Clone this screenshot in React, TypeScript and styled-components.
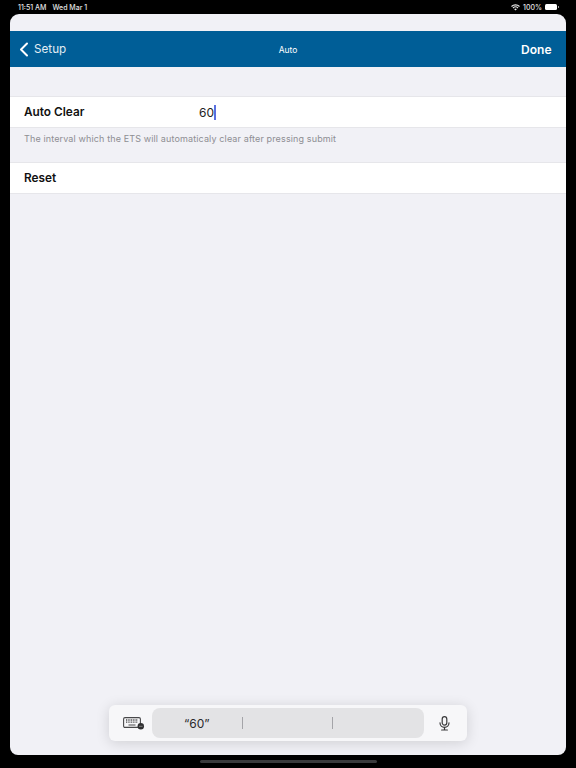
import React from "react";
import styled, { createGlobalStyle } from "styled-components";

const GlobalStyle = createGlobalStyle`
  html, body {
    margin: 0;
    padding: 0;
    background: #000;
    font-family: Inter, "Liberation Sans", sans-serif;
  }
`;

const Screen = styled.div`
  width: 576px;
  height: 768px;
  background: #000;
  display: flex;
  flex-direction: column;
  overflow: hidden;
`;

const StatusBar = styled.div`
  height: 14px;
  padding: 0 19px 0 18px;
  box-sizing: border-box;
  display: flex;
  align-items: center;
  justify-content: space-between;
  color: #e4e4e4;
  font-size: 7px;
  font-weight: 500;
`;

const StatusGroup = styled.div<{ $gap: number }>`
  display: flex;
  align-items: center;
  gap: ${(props) => props.$gap}px;
`;

const Battery = styled.div`
  width: 12px;
  height: 6px;
  border-radius: 1.5px;
  background: #fff;
  position: relative;

  &::after {
    content: "";
    position: absolute;
    right: -2px;
    top: 2px;
    width: 1px;
    height: 2px;
    background: #999;
  }
`;

const Sheet = styled.div`
  position: relative;
  width: 556px;
  height: 741px;
  margin-left: 10px;
  background: #f1f1f6;
  border-radius: 9px 9px 8px 8px;
  overflow: hidden;
`;

const NavBar = styled.div`
  margin-top: 17px;
  height: 36px;
  background: #005e97;
  display: grid;
  grid-template-columns: 1fr auto 1fr;
  align-items: center;
  color: #fff;
`;

const BackLink = styled.div`
  display: flex;
  align-items: center;
  gap: 5px;
  padding-left: 9px;
  font-size: 11.7px;
  color: #e3edf4;
`;

const NavTitle = styled.div`
  font-size: 8.5px;
  padding-top: 2px;
`;

const DoneButton = styled.div`
  justify-self: end;
  padding-right: 14.5px;
  font-size: 12px;
  font-weight: 600;
`;

const Row = styled.div<{ $top: number }>`
  margin-top: ${(props) => props.$top}px;
  height: 32px;
  box-sizing: border-box;
  background: #fff;
  border-top: 1px solid #e6e6ea;
  border-bottom: 1px solid #e6e6ea;
  display: flex;
  align-items: center;
  padding-left: 14px;
`;

const RowLabel = styled.div`
  width: 175px;
  font-size: 11.8px;
  font-weight: 600;
  color: #111;
`;

const RowValue = styled.div`
  font-size: 12px;
  color: #222;
  display: flex;
  align-items: center;
`;

const Caret = styled.span`
  width: 2px;
  height: 15px;
  background: #5a6fe0;
`;

const FooterNote = styled.div`
  height: 34px;
  padding: 5px 0 0 14px;
  box-sizing: border-box;
  font-size: 9px;
  line-height: 12px;
  letter-spacing: 0.13px;
  color: #8e8e93;
`;

const FloatingBar = styled.div`
  position: absolute;
  left: 99px;
  top: 691px;
  width: 358px;
  height: 36px;
  box-sizing: border-box;
  background: #f7f7f9;
  border-radius: 6px;
  box-shadow: 0 2px 14px rgba(0, 0, 0, 0.14);
  display: flex;
  align-items: center;
  padding: 0 3px;
`;

const BarIcon = styled.div<{ $shift: number }>`
  flex: 0 0 40px;
  box-sizing: border-box;
  display: flex;
  align-items: center;
  justify-content: center;
  padding-left: ${(props) => props.$shift}px;
  color: #3a3a3c;
`;

const Suggestions = styled.div`
  width: 272px;
  height: 30px;
  border-radius: 8px;
  background: #e3e3e5;
  display: grid;
  grid-template-columns: repeat(3, 1fr);
  align-items: center;
`;

const Suggestion = styled.div<{ $divider?: boolean }>`
  height: 12px;
  display: flex;
  align-items: center;
  justify-content: center;
  font-size: 12px;
  color: #2a2a2c;
  border-right: ${(props) => (props.$divider ? "1px solid #a4a4a8" : "none")};
`;

const HomeArea = styled.div`
  flex: 1;
  display: flex;
  align-items: center;
  justify-content: center;
`;

const HomeIndicator = styled.div`
  width: 177px;
  height: 3px;
  border-radius: 2px;
  background: #3a3a3c;
`;

function WifiIcon() {
  return (
    <svg width="9" height="7" viewBox="0 0 18 13" fill="none" stroke="#e8e8e8" strokeWidth="2.2">
      <path d="M1 4.5a11.5 11.5 0 0 1 16 0" />
      <path d="M4 7.5a7.2 7.2 0 0 1 10 0" />
      <path d="M9 12.5l-2.6-2.7a3.7 3.7 0 0 1 5.2 0z" fill="#e8e8e8" stroke="none" />
    </svg>
  );
}

function ChevronIcon() {
  return (
    <svg width="10" height="15" viewBox="0 0 10 15" fill="none" stroke="#fff" strokeWidth="2" strokeLinecap="round" strokeLinejoin="round">
      <path d="M8 1.5 2 7.5l6 6" />
    </svg>
  );
}

function KeyboardIcon() {
  return (
    <svg width="22" height="14" viewBox="0 0 22 14" fill="none">
      <rect x="0.6" y="1.6" width="16.8" height="9.8" rx="1.4" stroke="#48484a" strokeWidth="1.1" />
      <path d="M3 4h12M3 6.2h12" stroke="#48484a" strokeWidth="1.3" strokeDasharray="1 0.7" />
      <path d="M5.5 9h7" stroke="#48484a" strokeWidth="1.1" />
      <circle cx="17.8" cy="10.3" r="3.2" fill="#2f2f31" />
      <path d="M16 10.3h3.6" stroke="#bbb" strokeWidth="0.6" />
    </svg>
  );
}

function MicIcon() {
  return (
    <svg width="11" height="15" viewBox="0 0 11 15" fill="none" stroke="#3a3a3c" strokeWidth="1.2" strokeLinecap="round">
      <rect x="3.2" y="0.7" width="4.6" height="8.4" rx="2.3" />
      <path d="M1 6.8a4.5 4.5 0 0 0 9 0" />
      <path d="M5.5 11.4v2.4M2.6 14h5.8" />
    </svg>
  );
}

export default function App() {
  return (
    <>
      <GlobalStyle />
      <Screen>
        <StatusBar>
          <StatusGroup $gap={6}>
            <span>11:51 AM</span>
            <span>Wed Mar 1</span>
          </StatusGroup>
          <StatusGroup $gap={3}>
            <WifiIcon />
            <span>100%</span>
            <Battery />
          </StatusGroup>
        </StatusBar>
        <Sheet>
          <NavBar>
            <BackLink>
              <ChevronIcon />
              <span>Setup</span>
            </BackLink>
            <NavTitle>Auto</NavTitle>
            <DoneButton>Done</DoneButton>
          </NavBar>
          <Row $top={29}>
            <RowLabel>Auto Clear</RowLabel>
            <RowValue>
              60
              <Caret />
            </RowValue>
          </Row>
          <FooterNote>The interval which the ETS will automaticaly clear after pressing submit</FooterNote>
          <Row $top={0}>
            <RowLabel>Reset</RowLabel>
          </Row>
          <FloatingBar>
            <BarIcon $shift={4}>
              <KeyboardIcon />
            </BarIcon>
            <Suggestions>
              <Suggestion $divider>“60”</Suggestion>
              <Suggestion $divider />
              <Suggestion />
            </Suggestions>
            <BarIcon $shift={0}>
              <MicIcon />
            </BarIcon>
          </FloatingBar>
        </Sheet>
        <HomeArea>
          <HomeIndicator />
        </HomeArea>
      </Screen>
    </>
  );
}
